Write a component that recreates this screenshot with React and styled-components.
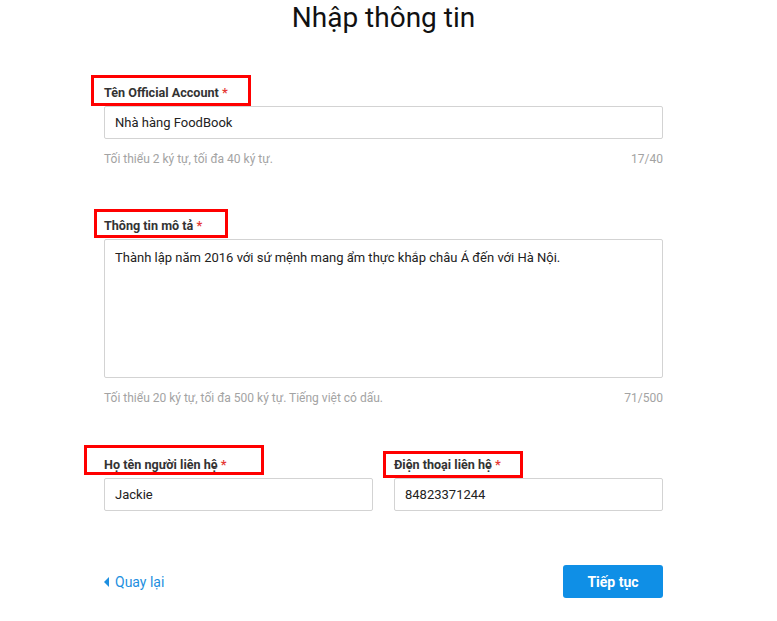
import React from "react";
import styled, { createGlobalStyle } from "styled-components";

const Global = createGlobalStyle`
  html, body { margin: 0; padding: 0; background: #fff; }
  body { font-family: Roboto, "Noto Sans", Arial, sans-serif; color: #333; }
  * { box-sizing: border-box; }
`;

const Page = styled.div`
  width: 777px;
  min-height: 621px;
  background: #fff;
`;

const Column = styled.div`
  width: 559px;
  margin-left: 104px;
  display: flex;
  flex-direction: column;
`;

const Title = styled.h1`
  margin: 0 0 49px;
  font-size: 28px;
  line-height: 36px;
  font-weight: 400;
  color: #111;
  text-align: center;
`;

const Field = styled.div`
  display: flex;
  flex-direction: column;
  margin-bottom: ${(p) => p.$gap || 0}px;
`;

const Label = styled.label`
  position: relative;
  display: block;
  font-size: 12.6px;
  line-height: 16px;
  font-weight: 700;
  color: #333;
  margin-bottom: 5px;
`;

const Star = styled.span`
  color: #e53935;
  font-weight: 700;
`;

const Highlight = styled.span`
  position: absolute;
  border: 3px solid #ff0000;
  pointer-events: none;
`;

const Box = styled.div`
  border: 1px solid #d3d3d3;
  border-radius: 2px;
  background: #fff;
  font-size: 13px;
  color: #222;
  padding: 0 10px;
  height: ${(p) => p.$h}px;
  display: flex;
  align-items: ${(p) => (p.$multi ? "flex-start" : "center")};
  padding-top: ${(p) => (p.$multi ? 9 : 0)}px;
  line-height: 18px;
`;

const Hint = styled.div`
  display: flex;
  justify-content: space-between;
  margin-top: 12px;
  font-size: 12px;
  line-height: 16px;
  color: #a3a3a3;
`;

const Row = styled.div`
  display: grid;
  grid-template-columns: 1fr 1fr;
  column-gap: 21px;
  margin-bottom: 54px;
`;

const Footer = styled.div`
  display: flex;
  justify-content: space-between;
  align-items: center;
`;

const Back = styled.a`
  display: flex;
  align-items: center;
  gap: 6px;
  font-size: 14px;
  color: #1d8fe0;
  text-decoration: none;
  cursor: pointer;
`;

const NextButton = styled.button`
  width: 100px;
  height: 33px;
  border: none;
  border-radius: 3px;
  background: #0f8fe6;
  color: #fff;
  font-family: inherit;
  font-size: 14px;
  font-weight: 700;
  cursor: pointer;
`;

const Mark = ({ top, left, width, height }) => (
  <Highlight style={{ top, left, width, height }} />
);

export default function App() {
  return (
    <>
      <Global />
      <Page>
        <Column>
          <Title>Nhập thông tin</Title>

          <Field $gap={51}>
            <Label>
              Tên Official Account <Star>*</Star>
              <Mark top={-10} left={-13} width={160} height={31} />
            </Label>
            <Box $h={33}>Nhà hàng FoodBook</Box>
            <Hint>
              <span>Tối thiểu 2 ký tự, tối đa 40 ký tự.</span>
              <span>17/40</span>
            </Hint>
          </Field>

          <Field $gap={51}>
            <Label>
              Thông tin mô tả <Star>*</Star>
              <Mark top={-9} left={-10} width={134} height={29} />
            </Label>
            <Box $h={139} $multi>
              Thành lập năm 2016 với sứ mệnh mang ẩm thực khắp châu Á đến với Hà Nội.
            </Box>
            <Hint>
              <span>Tối thiểu 20 ký tự, tối đa 500 ký tự. Tiếng việt có dấu.</span>
              <span>71/500</span>
            </Hint>
          </Field>

          <Row>
            <Field>
              <Label>
                Họ tên người liên hệ <Star>*</Star>
                <Mark top={-12} left={-20} width={180} height={30} />
              </Label>
              <Box $h={33}>Jackie</Box>
            </Field>
            <Field>
              <Label>
                Điện thoại liên hệ <Star>*</Star>
                <Mark top={-6} left={-11} width={140} height={27} />
              </Label>
              <Box $h={33}>84823371244</Box>
            </Field>
          </Row>

          <Footer>
            <Back>
              <svg width="5" height="10" viewBox="0 0 5 10">
                <path d="M5 0 L0 5 L5 10 Z" fill="#1d8fe0" />
              </svg>
              Quay lại
            </Back>
            <NextButton>Tiếp tục</NextButton>
          </Footer>
        </Column>
      </Page>
    </>
  );
}
